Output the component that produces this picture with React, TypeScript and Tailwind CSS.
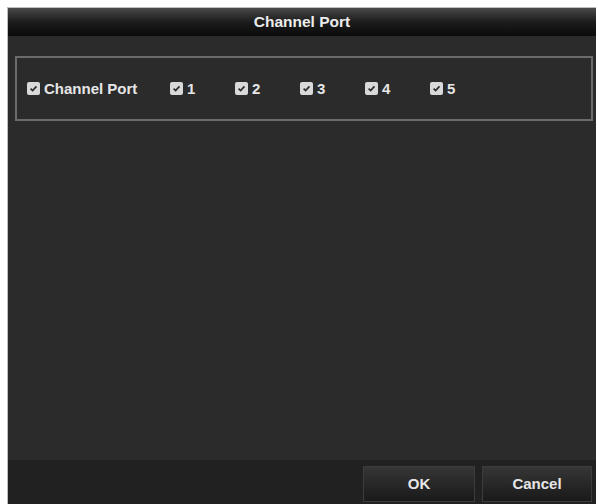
import React from "react";

function Box({ label, width }: { label: string; width: string }) {
  return (
    <div className={`flex items-center ${width}`}>
      {/* checked box */}
      <span className="flex h-[13px] w-[13px] items-center justify-center rounded-[2px] bg-[#d9d9d9]">
        <svg viewBox="0 0 10 10" className="h-[9px] w-[9px]">
          <path d="M1.8 5.2 L4 7.3 L8.3 2.6" fill="none" stroke="#2a2a2a" strokeWidth="1.8" />
        </svg>
      </span>
      <span className="ml-[4px] text-[15px] font-bold leading-none text-[#e6e6e6]">{label}</span>
    </div>
  );
}

export default function App() {
  const ports = ["1", "2", "3", "4", "5"];

  return (
    <div
      className="h-[504px] w-[598px] overflow-hidden bg-white pl-[7px] pt-[7px]"
      style={{ fontFamily: '"Liberation Sans", Arial, sans-serif' }}
    >
      <div className="flex h-[497px] w-[589px] flex-col border-l border-t border-[#bdbdbd] bg-[#2b2b2b]">
        {/* Title bar */}
        <div className="flex h-[28px] items-center justify-center bg-gradient-to-b from-[#4a4a4a] via-[#1c1c1c] to-[#0b0b0b] text-[15.5px] font-bold text-[#ececec]">
          Channel Port
        </div>

        {/* Content */}
        <div className="flex-1 pl-[7px] pr-[3px] pt-[20px]">
          <div className="flex h-[65px] items-center border-2 border-[#6b6b6b] pl-[10px]">
            <Box label="Channel Port" width="w-[143px]" />
            {ports.map((p) => (
              <Box key={p} label={p} width="w-[65px]" />
            ))}
          </div>
        </div>

        {/* Footer */}
        <div className="flex h-[44px] items-start justify-end gap-[7px] bg-[#212121] pr-[4px] pt-[6px]">
          <button className="h-[36px] w-[112px] border border-[#3c3c3c] bg-gradient-to-b from-[#363636] to-[#1a1a1a] text-[15px] font-bold text-[#e6e6e6]">
            OK
          </button>
          <button className="h-[36px] w-[110px] border border-[#3c3c3c] bg-gradient-to-b from-[#363636] to-[#1a1a1a] text-[15px] font-bold text-[#e6e6e6]">
            Cancel
          </button>
        </div>
      </div>
    </div>
  );
}
